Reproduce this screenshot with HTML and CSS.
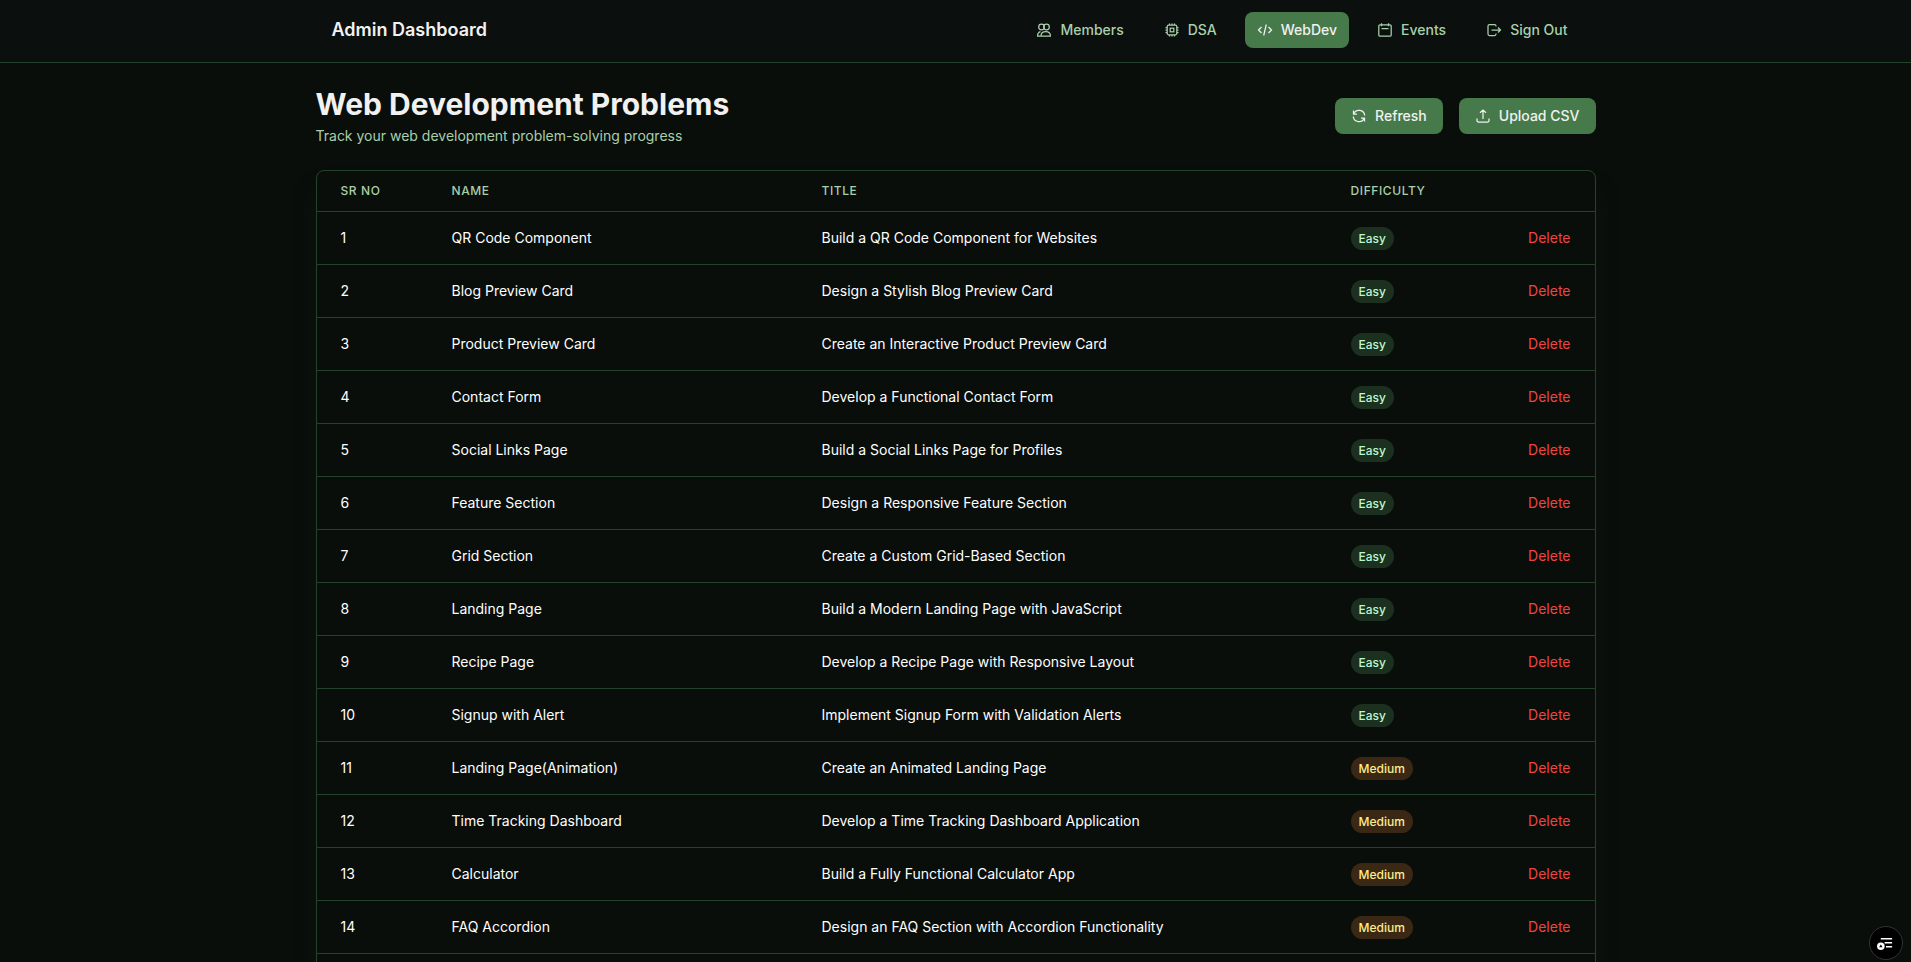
FILE: index.html
```html
<!DOCTYPE html>
<html lang="en">
<head>
<meta charset="utf-8">
<title>Admin Dashboard</title>
<link rel="stylesheet" href="styles.css">
</head>
<body>
<header class="topbar">
  <div class="container topbar-inner">
    <a class="brand" href="#">Admin Dashboard</a>
    <nav class="nav">
      <a class="nav-link" href="#"><svg class="icon" viewBox="0 0 16 16"><circle cx="5.500" cy="5" r="2.800"/><circle cx="10.500" cy="5" r="2.800"/><path d="M4.500 9.600C2.700 10 1.600 11.600 1.600 14H5M5 14c0-2.800 1.700-4.400 4.700-4.400s4.700 1.600 4.700 4.400z"/></svg>Members</a>
      <a class="nav-link" href="#"><svg class="icon" viewBox="0 0 16 16"><rect x="3.200" y="3.200" width="9.600" height="9.600" rx="1.500"/><rect x="6.200" y="6.200" width="3.600" height="3.600"/><path d="M5.500 3V1.500M8 3V1.500M10.500 3V1.500M5.500 14.500V13M8 14.500V13M10.500 14.500V13M3 5.500H1.500M3 8H1.500M3 10.500H1.500M14.500 5.500H13M14.500 8H13M14.500 10.500H13"/></svg>DSA</a>
      <a class="nav-link active" href="#" aria-current="page"><svg class="icon" viewBox="0 0 16 16"><path d="M4.500 5 1.500 8l3 3M11.500 5l3 3-3 3M9.300 2.500l-2.600 11"/></svg>WebDev</a>
      <a class="nav-link" href="#"><svg class="icon" viewBox="0 0 16 16"><rect x="1.800" y="2.800" width="12.400" height="11.400" rx="1.300"/><path d="M4.500 1.200v3M11.500 1.200v3M4.500 6.500h7"/></svg>Events</a>
      <a class="nav-link" href="#"><svg class="icon" viewBox="0 0 16 16"><path d="M10 4.500V4a1.500 1.500 0 0 0-1.500-1.500h-5A1.500 1.500 0 0 0 2 4v8a1.500 1.500 0 0 0 1.500 1.500h5A1.500 1.500 0 0 0 10 12v-.5M5.500 8h9M12 5.500 14.500 8 12 10.500"/></svg>Sign Out</a>
    </nav>
  </div>
</header>
<main class="container page">
  <div class="page-head">
    <div>
      <h1 class="title">Web Development Problems</h1>
      <p class="subtitle">Track your web development problem-solving progress</p>
    </div>
    <div class="actions">
      <button class="btn" type="button"><svg class="icon" viewBox="0 0 16 16"><path d="M2.500 2.500v3.500h3.500M2.700 6A5.700 5.700 0 0 1 13.700 7.500M13.500 13.500V10H10M13.300 10A5.700 5.700 0 0 1 2.300 8.500"/></svg>Refresh</button>
      <button class="btn" type="button"><svg class="icon" viewBox="0 0 16 16"><path d="M8 11V2M5 4.800 8 2l3 2.800M2 10.500v2A1.500 1.500 0 0 0 3.500 14h9a1.500 1.500 0 0 0 1.500-1.500v-2"/></svg>Upload CSV</button>
    </div>
  </div>
  <div class="table-card">
    <table class="table">
      <colgroup><col class="col-no"><col class="col-name"><col class="col-title"><col class="col-diff"><col></colgroup>
      <thead><tr><th scope="col">SR NO</th><th scope="col">NAME</th><th scope="col">TITLE</th><th scope="col">DIFFICULTY</th><td></td></tr></thead>
      <tbody>
        <tr><td>1</td><td>QR Code Component</td><td>Build a QR Code Component for Websites</td><td><span class="badge easy">Easy</span></td><td class="end"><button class="delete" type="button">Delete</button></td></tr>
        <tr><td>2</td><td>Blog Preview Card</td><td>Design a Stylish Blog Preview Card</td><td><span class="badge easy">Easy</span></td><td class="end"><button class="delete" type="button">Delete</button></td></tr>
        <tr><td>3</td><td>Product Preview Card</td><td>Create an Interactive Product Preview Card</td><td><span class="badge easy">Easy</span></td><td class="end"><button class="delete" type="button">Delete</button></td></tr>
        <tr><td>4</td><td>Contact Form</td><td>Develop a Functional Contact Form</td><td><span class="badge easy">Easy</span></td><td class="end"><button class="delete" type="button">Delete</button></td></tr>
        <tr><td>5</td><td>Social Links Page</td><td>Build a Social Links Page for Profiles</td><td><span class="badge easy">Easy</span></td><td class="end"><button class="delete" type="button">Delete</button></td></tr>
        <tr><td>6</td><td>Feature Section</td><td>Design a Responsive Feature Section</td><td><span class="badge easy">Easy</span></td><td class="end"><button class="delete" type="button">Delete</button></td></tr>
        <tr><td>7</td><td>Grid Section</td><td>Create a Custom Grid-Based Section</td><td><span class="badge easy">Easy</span></td><td class="end"><button class="delete" type="button">Delete</button></td></tr>
        <tr><td>8</td><td>Landing Page</td><td>Build a Modern Landing Page with JavaScript</td><td><span class="badge easy">Easy</span></td><td class="end"><button class="delete" type="button">Delete</button></td></tr>
        <tr><td>9</td><td>Recipe Page</td><td>Develop a Recipe Page with Responsive Layout</td><td><span class="badge easy">Easy</span></td><td class="end"><button class="delete" type="button">Delete</button></td></tr>
        <tr><td>10</td><td>Signup with Alert</td><td>Implement Signup Form with Validation Alerts</td><td><span class="badge easy">Easy</span></td><td class="end"><button class="delete" type="button">Delete</button></td></tr>
        <tr><td>11</td><td>Landing Page(Animation)</td><td>Create an Animated Landing Page</td><td><span class="badge medium">Medium</span></td><td class="end"><button class="delete" type="button">Delete</button></td></tr>
        <tr><td>12</td><td>Time Tracking Dashboard</td><td>Develop a Time Tracking Dashboard Application</td><td><span class="badge medium">Medium</span></td><td class="end"><button class="delete" type="button">Delete</button></td></tr>
        <tr><td>13</td><td>Calculator</td><td>Build a Fully Functional Calculator App</td><td><span class="badge medium">Medium</span></td><td class="end"><button class="delete" type="button">Delete</button></td></tr>
        <tr><td>14</td><td>FAQ Accordion</td><td>Design an FAQ Section with Accordion Functionality</td><td><span class="badge medium">Medium</span></td><td class="end"><button class="delete" type="button">Delete</button></td></tr>
        <tr><td colspan="5"></td></tr>
      </tbody>
    </table>
  </div>
</main>
<button class="fab" type="button" aria-label="Page tools"><svg viewBox="0 0 34 34"><path d="M11.500 12.500h12M15.500 16.800h8M17 21h6.500" fill="none" stroke="#fff" stroke-width="1.600"/><circle cx="11.500" cy="20.500" r="4" fill="#fff"/><path d="M11.500 18.500l1.800 3H9.700z" fill="#000"/></svg></button>
</body>
</html>
```
FILE: styles.css
```css
*, *::before, *::after { box-sizing: border-box; }
html { scrollbar-width: none; }
body {
  margin: 0;
  height: 100vh;
  overflow: hidden;
  background: #090e0a;
  color: #f1f1f1;
  font-family: Inter, "Liberation Sans", sans-serif;
  font-size: 14px;
  line-height: 20px;
}
h1, p { margin: 0; }
a { color: inherit; text-decoration: none; }
button { font: inherit; color: inherit; border: 0; background: none; padding: 0; cursor: pointer; }
.container { width: 100%; max-width: 1280px; margin: 0 auto; }
.topbar { background: #0b0f0e; border-bottom: 1px solid #24432a; }
.topbar-inner { display: flex; align-items: center; justify-content: space-between; padding: 12px 16px 14px; }
.brand { font-size: 18px; line-height: 28px; font-weight: 600; }
.nav { display: flex; gap: 16px; }
.nav-link {
  display: flex; align-items: center; gap: 8px;
  padding: 8px 12px; border-radius: 8px;
  color: #a9cfab; font-weight: 500;
}
.nav-link.active { background: #467a4a; color: #f1f1f1; }
.icon { width: 16px; height: 16px; fill: none; stroke: currentColor; stroke-width: 1.25; }
.page { padding-top: 23px; }
.page-head { display: flex; align-items: center; justify-content: space-between; margin-bottom: 24px; }
.title { font-size: 30px; line-height: 36px; font-weight: 700; }
.subtitle { margin-top: 4px; color: #a9cfab; }
.actions { display: flex; gap: 16px; }
.btn {
  display: flex; align-items: center; gap: 8px;
  padding: 8px 16px; border-radius: 8px;
  background: #467a4a; font-weight: 500;
}
.table-card {
  border: 1px solid #24432a; border-radius: 8px;
  background: #090e0a;
  box-shadow: 0 20px 25px -5px rgba(26, 32, 28, 0.5);
}
.table { width: 100%; table-layout: fixed; border-collapse: separate; border-spacing: 0; text-align: left; color: #fff; }
.col-no { width: 111px; }
.col-name { width: 370px; }
.col-title { width: 529px; }
.col-diff { width: 140px; }
.table th, .table td { padding: 0 24px; height: 53px; border-bottom: 1px solid #24432a; vertical-align: middle; }
.table thead th, .table thead td {
  height: 41px; font-size: 12px; line-height: 16px; font-weight: 500;
  letter-spacing: 0.6px; color: #a9cfab;
}
.badge {
  display: inline-block; padding: 2px 8px; border-radius: 12px;
  font-size: 12px; line-height: 19px; font-weight: 500; vertical-align: top;
}
.easy { background: #1b301f; color: #bbf7d0; }
.medium { background: #3b2814; color: #fdec8b; }
.table .end { text-align: right; }
.delete { color: #ef4444; vertical-align: top; }
.fab {
  position: fixed; right: 8px; bottom: 2px;
  width: 34px; height: 34px; border-radius: 50%;
  background: #000; border: 1px solid #333;
}
.fab svg { display: block; width: 32px; height: 32px; }
```
